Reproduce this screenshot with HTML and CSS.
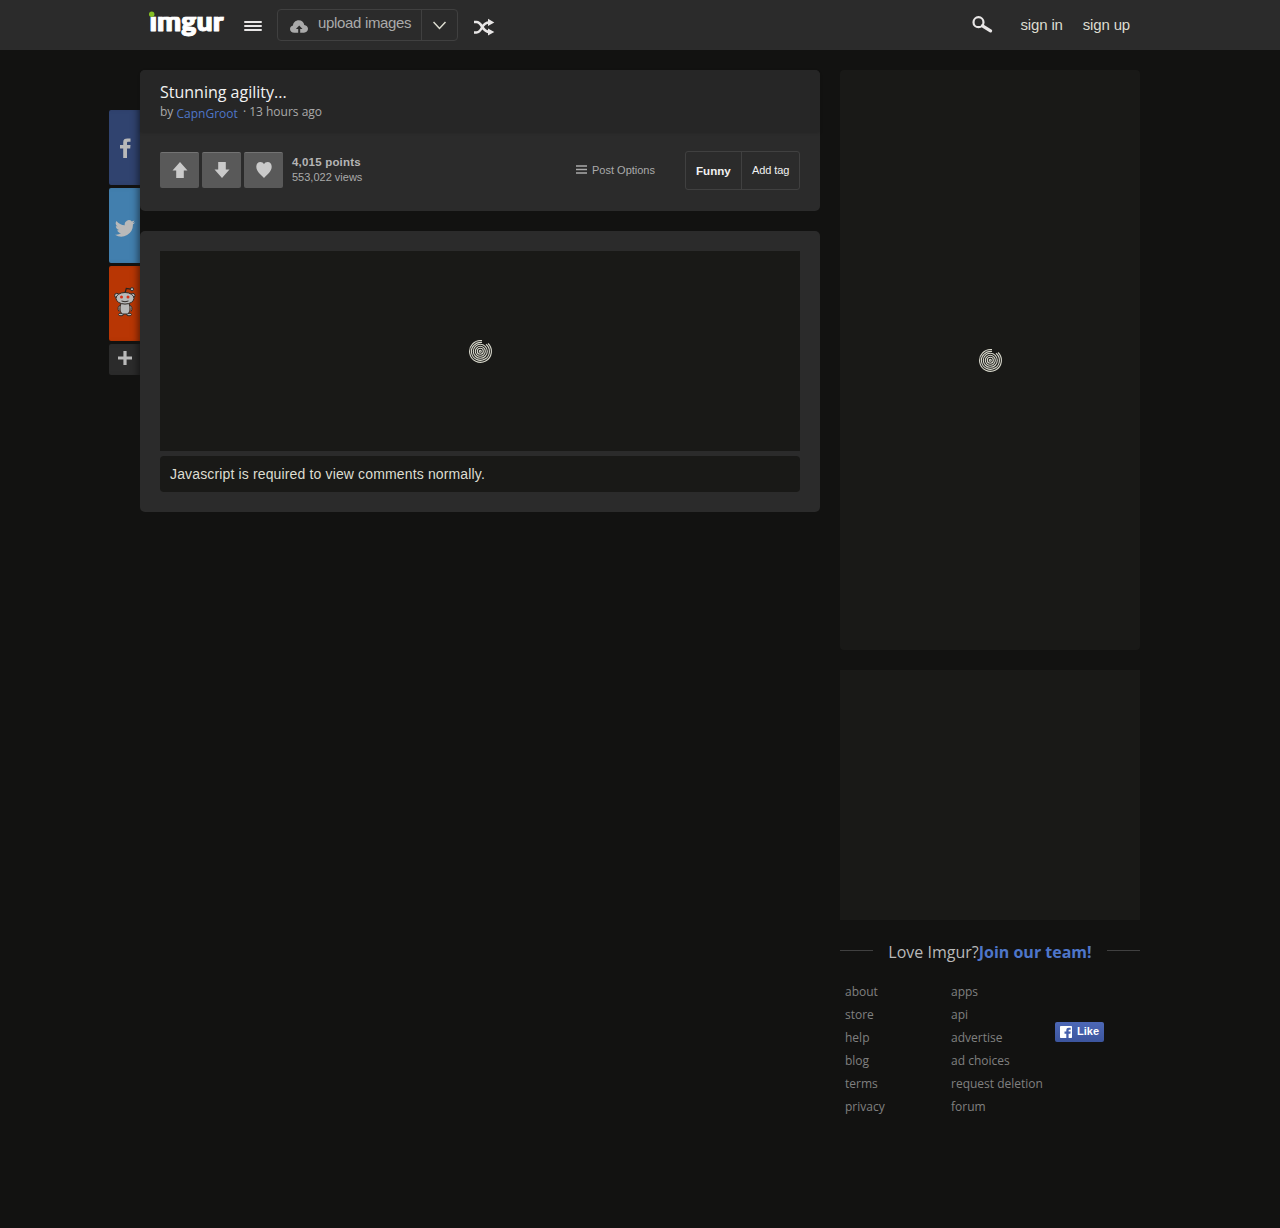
FILE: index.html
```html
<!DOCTYPE html>
<html lang="en">
<head>
<meta charset="utf-8">
<title>Stunning agility... - Imgur</title>
<link rel="stylesheet" href="styles.css">
</head>
<body>
<svg class="defs" width="0" height="0">
  <clipPath id="wordmark"><rect x="0" y="13.800" width="78" height="26"/></clipPath>
  <symbol id="spinner" viewBox="0 0 24 24">
    <g fill="none" stroke="#d8d8cc" stroke-width="1.1">
      <circle cx="12.300" cy="12.300" r="1"/><circle cx="12.300" cy="12.300" r="3"/><circle cx="12.300" cy="12.300" r="5"/><circle cx="12.300" cy="12.300" r="7"/>
      <path d="M18 5.300A9 9 0 1 1 14 3.500"/><path d="M20 4.500A10.900 10.900 0 1 1 14 1.600"/>
    </g>
  </symbol>
</svg>
<header class="topbar">
  <div class="topbar-inner">
    <a class="logo"><svg width="78" height="40" viewBox="0 0 78 40"><text x="1.500" y="28" textLength="74" lengthAdjust="spacingAndGlyphs" clip-path="url(#wordmark)">imgur</text><circle cx="3.700" cy="11.300" r="2.700" fill="#85bf25"/></svg></a>
    <svg class="menu" width="18" height="12" viewBox="0 0 18 12"><path d="M1 2h16M1 6h16M1 10h16" stroke="#e8e6e6" stroke-width="2" stroke-linecap="round"/></svg>
    <div class="upload">
      <a class="upload-main"><svg width="18" height="13" viewBox="0 0 18 13"><path fill="#aaa" d="M4.300 12.700C1.800 12.700 0 11.200 0 9c0-1.900 1.200-3.300 3-3.600C3.300 2.300 5.700.2 8.700.2c2.900 0 5.100 1.900 5.600 4.700C16.500 5.100 18 6.700 18 8.800c0 2.300-1.700 3.900-4 3.900h-3.800V9h2.300L9.200 5.400 5.900 9h2.300v3.700z"/></svg><span>upload images</span></a>
      <a class="upload-more"><svg width="14" height="9" viewBox="0 0 14 9"><path d="M.5 1l6 6.500L12.500 1" fill="none" stroke="#ddddd1" stroke-width="1.500"/></svg></a>
    </div>
    <svg class="shuffle" width="21" height="18" viewBox="0 0 21 18"><g fill="none" stroke="#e8e6e6" stroke-width="2.500"><path d="M0 4h2.500c2.500 0 4 2 5.500 4.500s3.500 5.500 7.500 5.500M0 14.500h2.500c2.500 0 4-2 5.500-5s3.500-5 7.500-5"/></g><path fill="#e8e6e6" d="M14 .7v7.200L20.300 4.400zM14 10.500v7l6.300-3.500z"/></svg>
    <nav class="account">
      <svg width="21" height="17" viewBox="0 0 21 17"><circle cx="6.500" cy="6.200" r="5" fill="none" stroke="#e8e6e6" stroke-width="2.200"/><path d="M10.500 9.800l8 5" stroke="#e8e6e6" stroke-width="3.200" stroke-linecap="round"/></svg>
      <a class="signin">sign in</a><a>sign up</a>
    </nav>
  </div>
</header>
<div class="page">
  <aside class="share">
    <a class="facebook"><svg width="11" height="20" viewBox="0 0 11 20"><path fill="#b9b9b9" d="M3.200 20v-9.500H0V7h3.200V4.500C3.200 1.500 4.700.6 7.500.6H10.500v3.200H8.700C7.500 3.800 7 4 7 5V7h3.500l-.3 3.500H7V20z"/></svg></a>
    <a class="twitter"><svg width="20" height="17" viewBox="0 0 24 20"><path fill="#b9b9b9" d="M24 2.400a10 10 0 0 1-2.800.8A5 5 0 0 0 23.300.500a10 10 0 0 1-3.100 1.200A4.900 4.900 0 0 0 11.800 6.200 14 14 0 0 1 1.700 1a4.900 4.900 0 0 0 1.500 6.600A5 5 0 0 1 1 7c0 2.300 1.600 4.400 3.900 4.900a5 5 0 0 1-2.200.1 4.900 4.900 0 0 0 4.600 3.400A9.900 9.900 0 0 1 0 17.400 14 14 0 0 0 21.500 5a10 10 0 0 0 2.500-2.600z"/></svg></a>
    <a class="reddit"><svg width="22" height="30" viewBox="0 0 22 30"><path d="M11 6l1.300-4.500 4.500.7" fill="none" stroke="#27221f" stroke-width="1.200"/><g fill="#b9b9b9" stroke="#302a27"><circle cx="18" cy="2.200" r="1.600"/><circle cx="2.800" cy="8.500" r="2.200"/><circle cx="18.800" cy="8.500" r="2.200"/><path d="M6.500 18Q2.500 20 5 24.500M15.500 18q4 2 1.500 6.500"/><ellipse cx="7" cy="27.500" rx="2.500" ry="1.300"/><ellipse cx="15" cy="27.500" rx="2.500" ry="1.300"/><path d="M7 16.500h8c1.500 4 1.400 7.500-1 10.500H8c-2.400-3-2.500-6.500-1-10.500z"/><ellipse cx="11" cy="11.300" rx="9" ry="5.800"/></g><circle cx="7.500" cy="10" r="1.500" fill="#d52f16"/><circle cx="14" cy="10" r="1.500" fill="#d52f16"/><path d="M7.500 14Q11 15.500 14.500 14" fill="none" stroke="#302a27"/></svg></a>
    <a class="more"><svg width="14" height="14" viewBox="0 0 14 14"><path d="M7 0v14M0 7h14" stroke="#b9b9b9" stroke-width="3.200"/></svg></a>
  </aside>
  <main class="main">
    <section class="card">
      <div class="post-head">
        <h1>Stunning agility...</h1>
        <p class="byline">by <a>CapnGroot</a><span> · 13 hours ago</span></p>
      </div>
      <div class="post-actions">
        <div class="votes">
          <a><svg width="16" height="16" viewBox="0 0 16 16"><path fill="#cacaca" d="M8 0l7.500 8.500h-3.700V16H4.200V8.500H.5z"/></svg></a>
          <a><svg width="16" height="16" viewBox="0 0 16 16"><path fill="#cacaca" d="M8 16L.5 7.500h3.700V0h7.600v7.500h3.700z"/></svg></a>
          <a><svg width="16" height="16" viewBox="0 0 16 16"><path fill="#cacaca" d="M8 16C5 13 .3 9.500.3 4.800.3 2 2 0 4.400 0 6 0 7.300.8 8 2.200 8.700.8 10 0 11.600 0 14 0 15.700 2 15.700 4.800 15.700 9.500 11 13 8 16z"/></svg></a>
        </div>
        <div class="stats"><b>4,015 points</b><span>553,022 views</span></div>
        <a class="options"><svg width="11" height="9" viewBox="0 0 11 9"><path d="M0 1h11M0 4.500h11M0 8h11" stroke="#aaa" stroke-width="1.400"/></svg><span>Post Options</span></a>
        <div class="tags"><a class="tag">Funny</a><a class="add">Add tag</a></div>
      </div>
    </section>
    <section class="card comments">
      <div class="loading"><svg width="24" height="24"><use href="#spinner"/></svg></div>
      <div class="notice">Javascript is required to view comments normally.</div>
    </section>
  </main>
  <aside class="side">
    <div class="gallery"><svg width="24" height="24"><use href="#spinner"/></svg></div>
    <div class="advert"></div>
    <div class="team"><span>Love Imgur?<a>Join our team!</a></span></div>
    <footer class="links">
      <ul><li>about</li><li>store</li><li>help</li><li>blog</li><li>terms</li><li>privacy</li></ul>
      <ul><li>apps</li><li>api</li><li>advertise</li><li>ad choices</li><li>request deletion</li><li>forum</li></ul>
      <a class="like"><svg width="12" height="12" viewBox="0 0 12 12"><rect width="12" height="12" rx=".7" fill="#fff"/><path fill="#4660ad" d="M6.300 12V7.800H4.500V5.600h1.800V4.300c0-1.700 1-2.500 2.500-2.500h1.900v2H9.300c-.5 0-.7.300-.7.800v1h2.100l-.3 2.200H8.600V12z"/></svg><span>Like</span></a>
    </footer>
  </aside>
</div>
</body>
</html>
```
FILE: styles.css
```css
* { box-sizing: border-box; }
body { margin: 0; min-height: 1228px; background: #121211; color: #ddddd1; font-family: "Liberation Sans", Arial, sans-serif; }
svg { display: block; flex: none; }
.defs { height: 0; }
.topbar { height: 50px; background: #2b2b2b; }
.topbar-inner { display: flex; width: 1000px; height: 50px; margin: 0 auto; }
.logo { margin: 3px 0 0 8px; }
.logo text { font: 800 27.500px Lato, sans-serif; fill: #fff; stroke: #fff; stroke-width: .9px; stroke-linejoin: round; }
.menu { margin: 20px 0 0 18px; }
.upload { display: flex; width: 181px; height: 32px; margin: 9px 0 0 15px; border: 1px solid #404040; border-radius: 4px; }
.upload-main { display: flex; width: 144px; padding: 10px 0 0 12px; gap: 10px; border-right: 1px solid #404040; font-size: 15px; line-height: 18px; letter-spacing: -.33px; color: #aaa; white-space: nowrap; }
.upload-main span { margin-top: -6px; }
.upload-more { padding: 11px 0 0 11px; }
.shuffle { margin: 18px 0 0 16px; }
.account { display: flex; margin: 16px 10px 0 auto; font-size: 15px; line-height: 18px; letter-spacing: -.16px; gap: 20px; white-space: nowrap; }
.signin { margin-left: 8px; }
.page { display: grid; grid-template-columns: 31px 680px 320px; width: 1031px; margin: 20px 0 0 109px; align-items: start; }
.share { display: grid; gap: 3px; padding-top: 40px; }
.share a { display: flex; height: 75px; align-items: center; justify-content: center; border-radius: 2px 0 0 2px; box-shadow: inset -7px 0 7px -5px rgba(0,0,0,.5); }
.share .facebook { background: #30436f; padding: 1px 0 0 1px; }
.share .twitter { background: #427fae; padding-top: 5px; }
.share .reddit { background: #b83604; padding-bottom: 4px; }
.share .more { height: 31px; padding-bottom: 3px; background: #2b2b2b; }
.main { display: grid; gap: 20px; }
.card { background: #2b2b2b; border-radius: 5px; }
.post-head { height: 62px; padding: 11px 20px 0; background: #262626; border-radius: 5px 5px 0 0; box-shadow: 0 1px 3px rgba(0,0,0,.15); font-family: "Open Sans", sans-serif; }
h1 { margin: 0; font-size: 16px; line-height: 22px; font-weight: 400; color: #f2f2f2; }
.byline { display: flex; margin: 0; font-size: 12px; line-height: 18px; color: #aaa; white-space: pre; }
.byline a, .team a { color: #4e76c9; }
.byline a { padding-top: 2px; margin-right: 2px; }
.post-actions { display: flex; height: 79px; padding: 19px 20px 0; }
.votes { display: flex; gap: 3px; padding-top: 1px; }
.votes a { display: flex; width: 39px; height: 36px; padding: 0 0 1px; align-items: center; justify-content: center; background: #595959; border-top: 1px solid #737373; border-radius: 2px; }
.stats { display: grid; align-content: start; margin: 4px 0 0 9px; font-size: 11px; line-height: 15px; color: #aaa; }
.stats b { font-size: 11.500px; letter-spacing: .2px; color: #b5b5b5; }
.options { display: flex; gap: 5px; align-items: center; height: 38px; margin: 0 30px 0 auto; font-size: 11px; color: #aaa; }
.options svg { margin-top: -1px; }
.tags { display: flex; width: 115px; height: 39px; border: 1px solid #404040; border-radius: 3px; line-height: 37px; color: #f2f2f2; font-size: 11px; }
.tag { width: 56px; padding: 0 0 0 10px; border-right: 1px solid #404040; font-size: 11.600px; font-weight: 700; }
.add { padding-left: 10px; letter-spacing: -.1px; }
.comments { padding: 20px; height: 281px; }
.loading { display: grid; place-items: center; height: 200px; background: #191917; }
.notice { height: 36px; margin-top: 5px; padding-left: 10px; border-radius: 4px; background: #191917; font-size: 14px; letter-spacing: .145px; line-height: 36px; }
.side { margin-left: 20px; width: 300px; font-family: "Open Sans", sans-serif; }
.gallery { display: flex; justify-content: center; height: 580px; padding-top: 278px; background: #191917; border-radius: 4px; }
.advert { height: 250px; margin-top: 20px; background: #191917; }
.team { display: flex; align-items: center; gap: 15px; margin-top: 21px; font-size: 16px; line-height: 22px; color: #b9b9b9; white-space: nowrap; }
.team a { font-weight: 700; }
.team::before, .team::after { content: ""; flex: 1; height: 1px; background: #404040; margin-bottom: 3px; }
.links { display: flex; padding: 17px 0 0 5px; font-size: 12px; line-height: 23px; color: #808080; }
.links ul { width: 106px; margin: 0; padding: 0; list-style: none; white-space: nowrap; }
.links .like { display: flex; width: 49px; height: 20px; margin: 42px 0 0 -2px; padding: 4px 0 0 5px; gap: 5px; border-radius: 2px; background: linear-gradient(#4d68b6, #3c559e); color: #fff; font: 700 11px/11px "Liberation Sans", sans-serif; }
```
